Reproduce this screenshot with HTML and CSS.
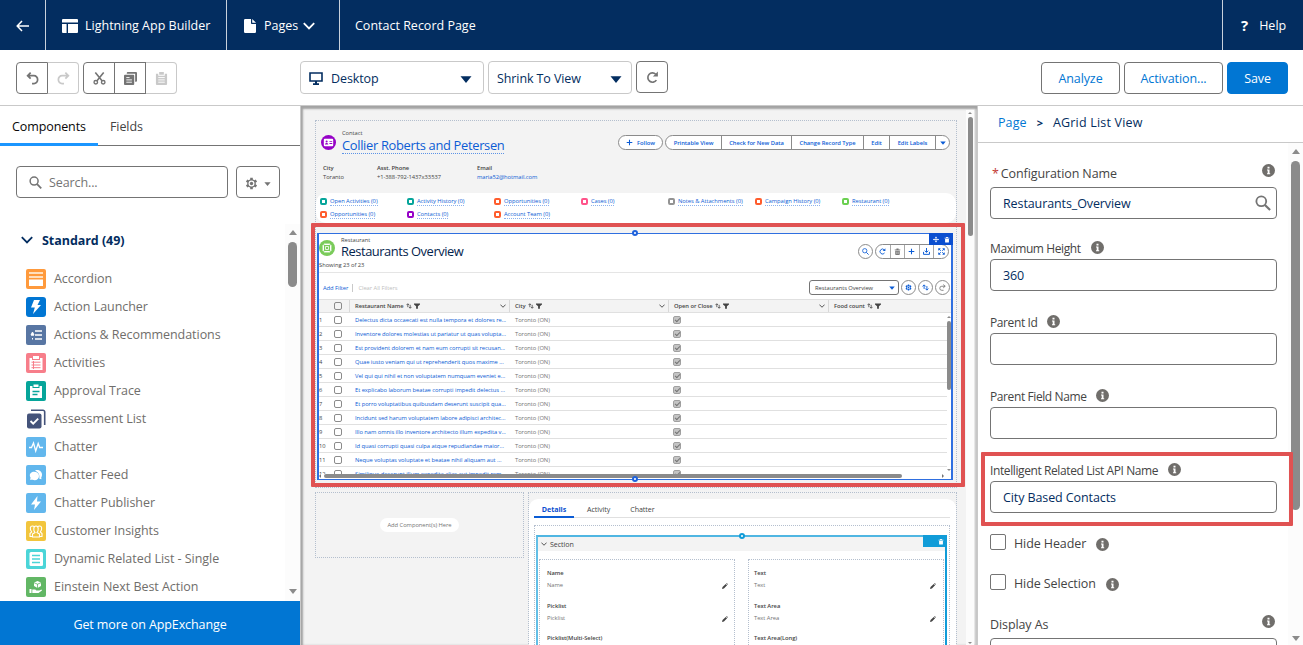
FILE: index.html
```html
<!DOCTYPE html>
<html lang="en">
<head>
    <meta charset="UTF-8" />
    <meta name="viewport" content="width=device-width, initial-scale=1" />
    <title>Lightning App Builder</title>
    <link rel="stylesheet" href="styles.css">
</head>
<body>

    <!-- Icon sprite -->
    <svg class="sprite" aria-hidden="true">
        <symbol id="back" viewBox="0 0 14 12"><path d="M13 6H1.5M6 1L1.2 6L6 11" fill="none" stroke="currentColor" stroke-width="1.5"/></symbol>
        <symbol id="layout" viewBox="0 0 16 14"><path d="M1 0h14a1 1 0 0 1 1 1v2.6H0V1a1 1 0 0 1 1-1zM0 5h4.6v9H1a1 1 0 0 1-1-1zM6 5h10v8a1 1 0 0 1-1 1H6z" fill="currentColor"/></symbol>
        <symbol id="page" viewBox="0 0 12 14"><path d="M1.2 0H7v4.2a.8.8 0 0 0 .8.8H12v7.8a1.2 1.2 0 0 1-1.2 1.2H1.2A1.2 1.2 0 0 1 0 12.8V1.2A1.2 1.2 0 0 1 1.2 0zM8.2 0L12 3.800H8.200z" fill="currentColor"/></symbol>
        <symbol id="chev" viewBox="0 0 12 8"><path d="M.8 1.200L6 6.500L11.200 1.200" fill="none" stroke="currentColor" stroke-width="1.800"/></symbol>
        <symbol id="undo" viewBox="0 0 14 14"><path d="M5 .8L1.800 4L5 7.200M1.800 4H8.500a4 4 0 0 1 4 4.200a4 4 0 0 1-4 4.200H6.500" fill="none" stroke="currentColor" stroke-width="1.900"/></symbol>
        <symbol id="redo" viewBox="0 0 14 14"><path d="M9 .8L12.200 4L9 7.200M12.200 4H5.500a4 4 0 0 0-4 4.200a4 4 0 0 0 4 4.200H7.500" fill="none" stroke="currentColor" stroke-width="1.900"/></symbol>
        <symbol id="cut" viewBox="0 0 14 14"><path d="M2.500 .5L9.700 9.500M11.500 .5L4.300 9.500" fill="none" stroke="currentColor" stroke-width="1.700"/><circle cx="3" cy="11" r="1.900" fill="none" stroke="currentColor" stroke-width="1.500"/><circle cx="11" cy="11" r="1.900" fill="none" stroke="currentColor" stroke-width="1.500"/></symbol>
        <symbol id="copy" viewBox="0 0 14 14"><path d="M4 0h9a1 1 0 0 1 1 1v8.500a1 1 0 0 1-1 1H12V2H3V1a1 1 0 0 1 1-1z" fill="currentColor"/><rect x="0" y="3" width="11" height="11" rx="1" fill="currentColor"/><path d="M2.500 6h3.500M2.500 8.500h6M2.500 11h6" stroke="#fff"/></symbol>
        <symbol id="paste" viewBox="0 0 14 14"><path d="M1 2h2.500v2h7V2H13v11a1 1 0 0 1-1 1H2a1 1 0 0 1-1-1zM4.500 0h5v3h-5z" fill="currentColor"/><path d="M3.500 6h7M3.500 8.500h7M3.500 11h7" stroke="#fff"/></symbol>
        <symbol id="desktop" viewBox="0 0 14 13"><path d="M1 1h12v8H1z" fill="none" stroke="currentColor" stroke-width="1.600"/><path d="M6 9h2v2.200h2V13H4v-1.800h2z" fill="currentColor"/></symbol>
        <symbol id="caret" viewBox="0 0 12 7"><path d="M.5 .3h11L6 7z" fill="currentColor"/></symbol>
        <symbol id="refresh" viewBox="0 0 14 14"><path d="M11.200 9.800A5 5 0 1 1 10.500 3.500" fill="none" stroke="currentColor" stroke-width="1.800"/><path d="M12.800 .5V6H7.400z" fill="currentColor"/></symbol>
        <symbol id="search" viewBox="0 0 14 14"><circle cx="5.500" cy="5.500" r="4.300" fill="none" stroke="currentColor" stroke-width="1.600"/><path d="M8.700 8.700L13.200 13.200" stroke="currentColor" stroke-width="1.900"/></symbol>
        <symbol id="gear" viewBox="0 0 14 14"><path d="M7 0.800v12.400M1.700 3.900l10.600 6.200M12.300 3.900L1.700 10.100" stroke="currentColor" stroke-width="2.800"/><circle cx="7" cy="7" r="4.600" fill="currentColor"/><circle cx="7" cy="7" r="3.200" fill="#fff"/><circle cx="7" cy="7" r="1.800" fill="currentColor"/></symbol>
        <symbol id="info" viewBox="0 0 13 13"><circle cx="6.500" cy="6.500" r="6.500" fill="currentColor"/><path d="M5.500 2.800h2v1.800h-2zM5 5.500h2.500v3.700H8.200v1H5v-1h.7V6.500H5z" fill="#fff"/></symbol>
        <symbol id="trash" viewBox="0 0 10 10"><path d="M1 2h8v1.200H1zM3.500 .7h3V2h-3zM1.800 4h6.400v5a1 1 0 0 1-1 1H2.800a1 1 0 0 1-1-1z" fill="currentColor"/><path d="M4 5v3.800M6 5v3.800" stroke="#fff" stroke-width=".7"/></symbol>
        <symbol id="plus" viewBox="0 0 10 10"><path d="M5 1v8M1 5h8" stroke="currentColor" stroke-width="1.500"/></symbol>
        <symbol id="move" viewBox="0 0 10 10"><path d="M5 1v8M1 5h8" stroke="currentColor" stroke-width="1.300"/><path d="M3.200 2.200L5 0l1.800 2.200zM3.200 7.800L5 10l1.800-2.200zM2.200 3.200L0 5l2.200 1.800zM7.800 3.200L10 5L7.800 6.800z" fill="currentColor"/></symbol>
        <symbol id="download" viewBox="0 0 10 10"><path d="M5 0v6M2.500 3.800L5 6.300L7.500 3.800M.8 5.500v3.600h8.400V5.500" fill="none" stroke="currentColor" stroke-width="1.400"/></symbol>
        <symbol id="expand" viewBox="0 0 10 10"><path d="M1 3.500V1h2.500M6.500 1H9v2.500M9 6.500V9H6.500M3.500 9H1V6.500M1 1l3 3M9 1L6 4M9 9L6 6M1 9l3-3" fill="none" stroke="currentColor" stroke-width="1.300"/></symbol>
        <symbol id="sort" viewBox="0 0 10 10"><path d="M3 7V1.500M.8 3.500L3 1.200l2.200 2.300M7 3v5.500M4.800 6.500L7 8.800l2.200-2.300" fill="none" stroke="currentColor" stroke-width="1.300"/></symbol>
        <symbol id="share" viewBox="0 0 10 10"><path d="M6 .8L8.800 3.200L6 5.600M8.800 3.200H4a2.800 2.800 0 0 0 0 5.800h2.500" fill="none" stroke="currentColor" stroke-width="1.200"/></symbol>
        <symbol id="funnel" viewBox="0 0 10 10"><path d="M0 1h10v1.300L6.500 5.500V9.500h-3v-4L0 2.300z" fill="currentColor"/></symbol>
        <symbol id="pencil" viewBox="0 0 8 8"><path d="M0 8l.7-2.600L5 1.200l1.800 1.800L2.600 7.300zM5.600 .7L6.300 0l1.700 1.700l-.7.700z" fill="currentColor"/></symbol>
        <symbol id="card" viewBox="0 0 16 16"><rect x="3" y="4" width="10" height="8" rx="1" fill="#fff"/><circle cx="6" cy="7" r="1.100" fill="#9602c7"/><path d="M4.200 10.200c0-2.200 3.600-2.200 3.600 0zM9 6.300h3v1H9zM9 8.500h3v1H9z" fill="#9602c7"/></symbol>
        <symbol id="chip" viewBox="0 0 16 16"><rect x="4.500" y="4.500" width="7" height="7" rx="1" fill="none" stroke="#fff"/><path d="M6.500 6.500h3v3h-3zM6 3v1.500M8 3v1.500M10 3v1.500M6 11.500V13M8 11.500V13M10 11.500V13M3 6h1.500M3 8h1.500M3 10h1.500M11.500 6H13M11.500 8H13M11.500 10H13" fill="none" stroke="#fff" stroke-width=".8"/></symbol>
    </svg>

    <header class="top-bar">
        <div class="top-cell back-cell"><svg class="i-back"><use href="#back"/></svg></div>
        <div class="top-cell app-cell"><svg class="i-layout"><use href="#layout"/></svg><span>Lightning App Builder</span></div>
        <div class="top-cell pages-cell"><svg class="i-page"><use href="#page"/></svg><span>Pages</span><svg class="i-chev"><use href="#chev"/></svg></div>
        <div class="top-cell title-cell"><span>Contact Record Page</span></div>
        <div class="top-cell help-cell"><b>?</b><span>Help</span></div>
    </header>

    <div class="toolbar">
        <div class="btn-group">
            <button class="tool"><svg><use href="#undo"/></svg></button>
            <button class="tool off"><svg><use href="#redo"/></svg></button>
        </div>
        <div class="btn-group edit-group">
            <button class="tool"><svg><use href="#cut"/></svg></button>
            <button class="tool"><svg><use href="#copy"/></svg></button>
            <button class="tool off"><svg><use href="#paste"/></svg></button>
        </div>
        <div class="picker device-picker"><svg class="i-desktop"><use href="#desktop"/></svg><span>Desktop</span><svg class="i-caret"><use href="#caret"/></svg></div>
        <div class="picker zoom-picker"><span>Shrink To View</span><svg class="i-caret"><use href="#caret"/></svg></div>
        <button class="tool refresh"><svg><use href="#refresh"/></svg></button>
        <div class="actions">
            <button class="action w-analyze">Analyze</button>
            <button class="action w-activation">Activation...</button>
            <button class="action save">Save</button>
        </div>
    </div>

    <div class="workspace">
        <aside class="left-panel">
            <div class="tabs">
                <a class="tab active">Components</a>
                <a class="tab">Fields</a>
            </div>
            <div class="search-row">
                <div class="search-box"><svg><use href="#search"/></svg><span>Search...</span></div>
                <button class="gear-btn"><svg class="i-gear"><use href="#gear"/></svg><svg class="i-small-caret"><use href="#caret"/></svg></button>
            </div>
            <div class="component-area">
                <div class="component-list">
                    <h2><svg class="i-chev"><use href="#chev"/></svg>Standard (49)</h2>
                    <ul>
                        <li><svg viewBox="0 0 20 20"><rect width="20" height="20" rx="2" fill="#ff9a3c"/><path d="M3 3h14v2H3zM3 7h14v2H3z" fill="#ffdfbd"/><path d="M3 10.500h14V17H3z" fill="#fff"/></svg>Accordion</li>
                        <li><svg viewBox="0 0 20 20"><rect width="20" height="20" rx="3" fill="#0176d3"/><path d="M8 3h6l-2.500 5H15L7 17l1.800-6.500H5z" fill="#fff"/></svg>Action Launcher</li>
                        <li><svg viewBox="0 0 20 20"><rect width="20" height="20" rx="2" fill="#5876a3"/><path d="M9 6h7M9 10h7M9 14h7" stroke="#fff" stroke-width="1.500"/><path d="M6.500 7L5 10h3zM6.500 13v1.500M5 10h3" stroke="#fff" fill="#fff"/></svg>Actions &amp; Recommendations</li>
                        <li><svg viewBox="0 0 20 20"><rect width="20" height="20" rx="2" fill="#f77e8a"/><path d="M3.500 5H6v2h8V5h2.500v12h-13zM7 3h6v3H7z" fill="#fff"/><path d="M5.500 9.200h9M5.500 12h9M5.500 14.700h9M7.500 8v8" stroke="#f77e8a"/></svg>Activities</li>
                        <li><svg viewBox="0 0 20 20"><rect width="20" height="20" rx="2" fill="#06a59a"/><path d="M4 5h2.500v2h7V5H16v12H4zM7.500 3.500h5V6h-5z" fill="#fff"/><path d="M6.500 10.500h7M6.500 13.500h5" stroke="#06a59a" stroke-width="1.300"/></svg>Approval Trace</li>
                        <li><svg viewBox="0 0 20 20"><path d="M5 1.300h12a1.700 1.700 0 0 1 1.700 1.700v13" fill="none" stroke="#44537a" stroke-width="1.600"/><rect x="1" y="4.500" width="14.500" height="15" rx="2" fill="#44537a"/><path d="M4.500 12l2.700 2.700l5-5" fill="none" stroke="#fff" stroke-width="1.900"/></svg>Assessment List</li>
                        <li><svg viewBox="0 0 20 20"><rect width="20" height="20" rx="2" fill="#62b7ed"/><path d="M3 10.500h2.500L7.500 6l2.200 8l2.500-7.500l1.500 4h3.300" fill="none" stroke="#fff" stroke-width="1.300"/></svg>Chatter</li>
                        <li><svg viewBox="0 0 20 20"><rect width="20" height="20" rx="2" fill="#62b7ed"/><path d="M9 5.500c3-1.500 7 .5 7 4c0 1.500-.3 2.300-.8 3l.3 1.800l-2.200-.6C14 10 12.500 7 9 5.500z" fill="#fff"/><path d="M4 14.800l.6-2C2.500 9 5 6.700 8 6.700s5 2 5 4.200c0 3.200-3 5.200-6.500 3.900z" fill="#fff"/></svg>Chatter Feed</li>
                        <li><svg viewBox="0 0 20 20"><rect width="20" height="20" rx="2" fill="#62b7ed"/><path d="M11.500 3L5 11.500h4L8 17l7-8.500h-4z" fill="#fff"/></svg>Chatter Publisher</li>
                        <li><svg viewBox="0 0 20 20"><rect width="20" height="20" rx="2" fill="#f2c53d"/><path d="M4 15.500v-3l1.700-1.500C3.500 8 4 5 6.500 5c1 0 1.700.5 1.700.5M16 15.500v-3L14.300 11c2.200-3 1.700-6-.8-6c-1 0-1.700.5-1.700.5M6.500 16v-3L9 11.500C7 9 7.500 5 10 5s3 4 1 6.500l2.500 1.500v3zM3.500 15.500h3M13.500 15.500h3" fill="none" stroke="#fff" stroke-width="1.100"/></svg>Customer Insights</li>
                        <li><svg viewBox="0 0 20 20"><rect width="20" height="20" rx="2" fill="#4bd5d8"/><rect x="3.500" y="3" width="13.500" height="14" rx="1.500" fill="#fff"/><path d="M6 6.500h8M6 10h8M6 13.500h8" stroke="#4bd5d8" stroke-width="1.400"/></svg>Dynamic Related List - Single</li>
                        <li><svg viewBox="0 0 20 20"><rect width="20" height="20" rx="2" fill="#62b765"/><path d="M8 5.500L11.500 4L15 5.500V9l-3.500 2L8 9z" fill="#fff"/><path d="M8 5.700l3.500 1.500L15 5.700M11.500 7v4" fill="none" stroke="#62b765" stroke-width=".8"/><path d="M3.500 12h2v4h-2zM6.300 12.500h3l1 1h3l2.200-1l.5 1l-3.500 2.500H6.300z" fill="#fff"/></svg>Einstein Next Best Action</li>
                    </ul>
                </div>
                <div class="scrollbar left-scroll"><i class="arrow-up"></i><i class="thumb"></i><i class="arrow-down"></i></div>
            </div>
            <a class="exchange">Get more on AppExchange</a>
        </aside>

        <main class="stage">
            <div class="canvas">
                <section class="region head-region">
                    <div class="record-top">
                        <svg class="round purple"><use href="#card"/></svg>
                        <div class="record-name">
                            <small>Contact</small>
                            <a>Collier Roberts and Petersen</a>
                        </div>
                        <div class="pills">
                            <span class="pill w-follow"><svg><use href="#plus"/></svg>Follow</span>
                            <div class="pill-group">
                                <span class="w-print">Printable View</span>
                                <span class="w-check">Check for New Data</span>
                                <span class="w-change">Change Record Type</span>
                                <span class="w-edit">Edit</span>
                                <span class="w-labels">Edit Labels</span>
                                <span class="w-more"><svg><use href="#caret"/></svg></span>
                            </div>
                        </div>
                    </div>
                    <div class="facts">
                        <div class="f-city"><b>City</b><span>Toranto</span></div>
                        <div class="f-phone"><b>Asst. Phone</b><span>+1-388-792-1437x33537</span></div>
                        <div class="f-mail"><b>Email</b><a>maria52@hotmail.com</a></div>
                    </div>
                    <div class="quick-links">
                        <div><i class="teal"></i><a>Open Activities (0)</a></div>
                        <div><i class="teal"></i><a>Activity History (0)</a></div>
                        <div><i class="orange"></i><a>Opportunities (0)</a></div>
                        <div><i class="pink"></i><a>Cases (0)</a></div>
                        <div><i class="gray"></i><a>Notes &amp; Attachments (0)</a></div>
                        <div><i class="orange"></i><a>Campaign History (0)</a></div>
                        <div><i class="green"></i><a>Restaurant (0)</a></div>
                        <div><i class="orange"></i><a>Opportunities (0)</a></div>
                        <div><i class="violet"></i><a>Contacts (0)</a></div>
                        <div><i class="orange"></i><a>Account Team (0)</a></div>
                    </div>

                    <div class="agrid">
                        <div class="agrid-head">
                            <svg class="round lime"><use href="#chip"/></svg>
                            <div class="agrid-title">
                                <small>Restaurant</small>
                                <h1>Restaurants Overview</h1>
                            </div>
                            <p>Showing 23 of 23</p>
                            <div class="agrid-tools">
                                <span class="dot"><svg><use href="#search"/></svg></span>
                                <div class="dot-group">
                                    <span><svg><use href="#refresh"/></svg></span>
                                    <span class="dim"><svg><use href="#trash"/></svg></span>
                                    <span><svg><use href="#plus"/></svg></span>
                                    <span><svg><use href="#download"/></svg></span>
                                    <span><svg><use href="#expand"/></svg></span>
                                </div>
                            </div>
                        </div>
                        <div class="filter-row">
                            <a>Add Filter</a><span class="clear">Clear All Filters</span>
                            <div class="view-select">Restaurants Overview<svg><use href="#caret"/></svg></div>
                            <span class="dot"><svg><use href="#gear"/></svg></span>
                            <span class="dot"><svg><use href="#sort"/></svg></span>
                            <span class="dot dim"><svg><use href="#share"/></svg></span>
                        </div>
                        <div class="grid-row grid-header">
                            <div class="sel"><i class="check"></i></div>
                            <div>Restaurant Name<svg><use href="#sort"/></svg><svg><use href="#funnel"/></svg><svg class="col-chev"><use href="#chev"/></svg></div>
                            <div>City<svg><use href="#sort"/></svg><svg><use href="#funnel"/></svg><svg class="col-chev"><use href="#chev"/></svg></div>
                            <div>Open or Close<svg><use href="#sort"/></svg><svg><use href="#funnel"/></svg><svg class="col-chev"><use href="#chev"/></svg></div>
                            <div>Food count<svg><use href="#sort"/></svg><svg><use href="#funnel"/></svg></div>
                        </div>
                        <div class="grid-view">
                            <div class="grid-body" id="gridBody"></div>
                            <div class="mini-scroll"><i class="arrow-up"></i><i class="thumb"></i><i class="arrow-down"></i></div>
                        </div>
                        <div class="h-scroll"><i class="arrow-left"></i><i class="thumb"></i><i class="arrow-right"></i></div>
                        <div class="badge"><svg><use href="#move"/></svg><svg><use href="#trash"/></svg></div>
                        <i class="handle top"></i>
                        <i class="handle bottom"></i>
                    </div>
                </section>

                <div class="lower">
                    <section class="region drop-region"><span>Add Component(s) Here</span></section>
                    <section class="region detail-region">
                        <div class="detail-card">
                            <nav class="detail-tabs">
                                <a class="active">Details</a><a>Activity</a><a>Chatter</a>
                            </nav>
                            <div class="detail-drop">
                                <div class="section-box">
                                    <div class="section-head"><svg><use href="#chev"/></svg>Section</div>
                                    <div class="field-cols">
                                        <div class="field-col">
                                            <div class="field"><b>Name</b><span>Name</span><svg><use href="#pencil"/></svg></div>
                                            <div class="field"><b>Picklist</b><span>Picklist</span><svg><use href="#pencil"/></svg></div>
                                            <div class="field"><b>Picklist(Multi-Select)</b></div>
                                        </div>
                                        <div class="field-col">
                                            <div class="field"><b>Text</b><span>Text</span><svg><use href="#pencil"/></svg></div>
                                            <div class="field"><b>Text Area</b><span>Text Area</span><svg><use href="#pencil"/></svg></div>
                                            <div class="field"><b>Text Area(Long)</b></div>
                                        </div>
                                    </div>
                                    <div class="badge"><svg><use href="#trash"/></svg></div>
                                    <i class="handle top"></i>
                                </div>
                            </div>
                        </div>
                    </section>
                </div>
            </div>
            <div class="scrollbar stage-scroll"><i class="arrow-up"></i><i class="thumb"></i><i class="arrow-down"></i></div>
            <div class="callout grid-callout"></div>
        </main>

        <aside class="right-panel">
            <div class="crumbs"><a>Page</a><b>&gt;</b><span>AGrid List View</span></div>
            <div class="props">
                <form class="prop-form">
                    <div class="prop first">
                        <label><em>*</em>Configuration Name<svg class="far"><use href="#info"/></svg></label>
                        <div class="input">Restaurants_Overview<svg><use href="#search"/></svg></div>
                    </div>
                    <div class="prop">
                        <label>Maximum Height<svg><use href="#info"/></svg></label>
                        <div class="input">360</div>
                    </div>
                    <div class="prop">
                        <label>Parent Id<svg><use href="#info"/></svg></label>
                        <div class="input"></div>
                    </div>
                    <div class="prop">
                        <label>Parent Field Name<svg><use href="#info"/></svg></label>
                        <div class="input"></div>
                    </div>
                    <div class="prop called-out">
                        <label>Intelligent Related List API Name<svg><use href="#info"/></svg></label>
                        <div class="input">City Based Contacts</div>
                        <div class="callout prop-callout"></div>
                    </div>
                    <div class="ticks">
                        <div class="tick-row"><i></i>Hide Header<svg><use href="#info"/></svg></div>
                        <div class="tick-row"><i></i>Hide Selection<svg><use href="#info"/></svg></div>
                    </div>
                    <div class="prop last">
                        <label>Display As<svg class="far"><use href="#info"/></svg></label>
                        <div class="input"></div>
                    </div>
                </form>
                <div class="scrollbar right-scroll"><i class="arrow-up"></i><i class="thumb"></i><i class="arrow-down"></i></div>
            </div>
        </aside>
    </div>

    <script>
        const restaurants = [
            'Delectus dicta occaecati est nulla tempora et dolores re...',
            'Inventore dolores molestias ut pariatur ut quas volupta...',
            'Est provident dolorem et nam eum corrupti sit recusan...',
            'Quae iusto veniam qui ut reprehenderit quos maxime ...',
            'Vel qui qui nihil et non voluptatem numquam eveniet e...',
            'Et explicabo laborum beatae corrupti impedit delectus ...',
            'Et porro voluptatibus quibusdam deserunt suscipit qua...',
            'Incidunt sed harum voluptatem labore adipisci architec...',
            'Illo nam omnis illo inventore architecto illum expedita v...',
            'Id quasi corrupti quasi culpa atque repudiandae maior...',
            'Neque voluptas voluptate et beatae nihil aliquam aut ...',
            'Similique deserunt illum expedita alias aut impedit rem...'
        ];

        document.getElementById('gridBody').innerHTML = restaurants.map((name, i) => `
            <div class="grid-row">
                <div class="sel"><span>${i + 1}</span><i class="check"></i></div>
                <div><a>${name}</a></div>
                <div class="city">Toronto (ON)</div>
                <div><i class="check on"></i></div>
                <div></div>
            </div>`).join('');
    </script>

</body>
</html>
```
FILE: styles.css
```css
* {
    box-sizing: border-box;
}

body {
    margin: 0;
    width: 1303px;
    height: 645px;
    overflow: hidden;
    display: flex;
    flex-direction: column;
    font-family: 'Segoe UI', 'Open Sans', sans-serif;
    font-size: 12.5px;
    letter-spacing: -0.1px;
    color: #032d60;
    background-color: #fff;
}

.sprite {
    display: none;
}

svg {
    flex: none;
    display: block;
}

button {
    font: inherit;
    letter-spacing: inherit;
    padding: 0;
    background-color: #fff;
}

/* Top bar */
.top-bar {
    height: 50px;
    flex: none;
    display: flex;
    background-color: #032d60;
    color: #fff;
    letter-spacing: 0;
}

.top-cell {
    display: flex;
    align-items: center;
    border-right: 1px solid #c9d1dc;
}

.back-cell { width: 46px; padding-left: 16px; }
.app-cell { width: 181px; padding-left: 16px; gap: 7px; }
.pages-cell { width: 113px; padding-left: 17px; gap: 8px; }
.title-cell { flex: 1; padding-left: 15px; }
.help-cell { width: 80px; padding-left: 18px; gap: 11px; border-right: none; }
.help-cell b { font-size: 15px; }
.i-back { width: 14px; height: 12px; margin-top: 2px; }
.i-layout { width: 16px; height: 14px; margin-top: 2px; }
.i-page { width: 12px; height: 14px; margin-top: 1px; }
.i-chev { width: 12px; height: 8px; }
.pages-cell .i-chev { margin-left: -3px; margin-top: 2px; }

/* Toolbar */
.toolbar {
    height: 56px;
    flex: none;
    display: flex;
    align-items: flex-start;
    padding: 12px 15px 0 16px;
    border-bottom: 1px solid #c9c9c9;
}

.btn-group {
    display: flex;
}

.edit-group {
    margin-left: 4px;
}

.tool {
    width: 32px;
    height: 32px;
    display: flex;
    align-items: center;
    justify-content: center;
    border: 1px solid #747474;
    color: #747474;
}

.tool svg { width: 13px; height: 13px; }
.tool.off { border-color: #c9c9c9; color: #c9c9c9; }
.btn-group .tool + .tool { margin-left: -1px; }
.btn-group .tool.off { border-left: none; width: 31px; margin-left: 0 !important; }
.btn-group .tool:first-child { border-radius: 4px 0 0 4px; }
.btn-group .tool:last-child { border-radius: 0 4px 4px 0; }

.picker {
    height: 33px;
    margin-top: -1px;
    padding-top: 2px;
    display: flex;
    align-items: center;
    border: 1px solid #c9c9c9;
    border-radius: 4px;
}

.device-picker { width: 184px; margin-left: 123px; padding: 2px 11px 0 8px; gap: 8px; }
.zoom-picker { width: 144px; margin-left: 4px; padding: 2px 9px 0 8px; }
.picker .i-caret { margin-left: auto; width: 12px; height: 7px; margin-top: 2px; }
.i-desktop { width: 14px; height: 13px; margin-top: -1px; }

.refresh {
    margin: -1px 0 0 4px;
    border-radius: 4px;
}

.actions {
    margin-left: auto;
    display: flex;
    gap: 4px;
}

.action {
    height: 32px;
    border: 1px solid #747474;
    border-radius: 4px;
    color: #0176d3;
}

.w-analyze { width: 79px; }
.w-activation { width: 99px; }
.save { width: 61px; background-color: #0176d3; border-color: #0176d3; color: #fff; }

.workspace {
    flex: 1;
    display: flex;
    min-height: 0;
}

/* Left panel */
.left-panel {
    width: 300px;
    flex: none;
    display: flex;
    flex-direction: column;
}

.tabs {
    height: 40px;
    flex: none;
    display: flex;
    border-bottom: 1px solid #747474;
}

.tab {
    height: 40px;
    padding: 0 12px;
    line-height: 41px;
    color: #444;
}

.tab.active {
    width: 98px;
    color: #080707;
    border-bottom: 3px solid #1b96ff;
}

.search-row {
    display: flex;
    gap: 8px;
    padding: 20px 20px 0 16px;
}

.search-box {
    width: 212px;
    height: 32px;
    display: flex;
    align-items: center;
    gap: 7px;
    padding-left: 12px;
    border: 1px solid #747474;
    border-radius: 4px;
    color: #747474;
}

.search-box svg { width: 13px; height: 13px; }

.gear-btn {
    width: 44px;
    display: flex;
    align-items: center;
    justify-content: center;
    gap: 6px;
    border: 1px solid #747474;
    border-radius: 4px;
    color: #747474;
}

.i-gear { width: 13px; height: 13px; margin-top: 3px; }
.i-small-caret { width: 7px; height: 4px; margin-top: 3px; }

.component-area {
    flex: 1;
    display: flex;
    min-height: 0;
    margin-top: 26px;
}

.component-list {
    flex: 1;
    overflow: hidden;
}

.component-list h2 {
    display: flex;
    align-items: center;
    gap: 9px;
    height: 32px;
    margin: 0 0 8px;
    padding-left: 21px;
    font-size: 12.5px;
    font-weight: 700;
    letter-spacing: -0.05px;
}

.component-list ul {
    list-style: none;
    margin: 0;
    padding: 0;
}

.component-list li {
    display: flex;
    align-items: center;
    gap: 8px;
    height: 28px;
    padding: 1px 0 0 26px;
    color: #706e6b;
    letter-spacing: -0.04px;
}

.component-list li svg { width: 20px; height: 20px; margin-top: 1px; }

.exchange {
    height: 44px;
    flex: none;
    display: flex;
    align-items: center;
    justify-content: center;
    background-color: #0176d3;
    color: #fff;
    padding-top: 2px;
}

/* Scrollbars */
.scrollbar {
    flex: none;
    display: flex;
    flex-direction: column;
    align-items: center;
    background-color: #fcfcfc;
}

.arrow-up,
.arrow-down {
    border: 4.5px solid transparent;
    border-top-width: 0;
    border-bottom: 5px solid #8b8b8b;
}

.arrow-down {
    border-bottom-width: 0;
    border-top: 5px solid #8b8b8b;
    margin-top: auto;
}

.thumb {
    width: 9px;
    border-radius: 5px;
    background-color: #8b8b8b;
}

.left-scroll { width: 15px; padding: 6px 0 7px; }
.left-scroll .thumb { height: 45px; margin-top: 7px; }

/* Stage */
.stage {
    position: relative;
    width: 678px;
    flex: none;
    display: flex;
    overflow: hidden;
    background-color: #f3f3f3;
    border-left: 1px solid #c9c9c9;
    border-right: 1px solid #c9c9c9;
    box-shadow: inset 2px 3px 2px #a3a3a3, inset -2px 0 2px #c4c4c4;
    font-size: 5.8px;
    letter-spacing: -0.05px;
    line-height: 8px;
    color: #444;
}

.stage a {
    color: #0b5cd5;
}

.canvas {
    width: 665px;
    flex: none;
    padding: 14px 0 0 14px;
}

.region {
    border: 1px dotted #b4bfce;
}

.head-region {
    width: 642px;
    height: 368px;
}

.record-top {
    display: flex;
    height: 43px;
    padding: 9px 6px 0 5px;
}

.round {
    width: 15px;
    height: 15px;
    border-radius: 50%;
}

.purple { background-color: #9602c7; margin-top: 5px; }
.lime { background-color: #7acb5a; width: 16px; height: 16px; }

.record-name {
    margin-left: 6px;
    display: flex;
    flex-direction: column;
    align-items: flex-start;
}

.record-name small,
.agrid-title small {
    font-size: 5.8px;
    line-height: 7px;
}

.record-name a {
    font-size: 12.9px;
    letter-spacing: -0.32px;
    line-height: 16px;
    border-bottom: 1px dotted #5c93e6;
}

.pills {
    display: flex;
    gap: 2px;
    margin-left: auto;
    margin-top: 5px;
    font-weight: 600;
    color: #0b5cd5;
}

.pill,
.pill-group {
    display: flex;
    height: 15px;
    border: 1px solid #8b8b8b;
    border-radius: 8px;
    background-color: #fff;
}

.pill {
    align-items: center;
    justify-content: center;
    gap: 4px;
}

.pill svg { width: 7px; height: 7px; }

.pill-group span {
    display: flex;
    align-items: center;
    justify-content: center;
    border-right: 1px solid #8b8b8b;
}

.pill-group span:last-child { border-right: none; }
.w-follow { width: 45px; }
.w-print { width: 56px; }
.w-check { width: 70px; }
.w-change { width: 72px; }
.w-edit { width: 26px; }
.w-labels { width: 46px; }
.w-more { width: 13px; }
.w-more svg { width: 6px; height: 4px; }

.facts {
    display: flex;
    padding-left: 7px;
    height: 29px;
}

.facts > div { display: flex; flex-direction: column; line-height: 9px; }
.facts b { font-weight: 600; }
.f-city { width: 54px; }
.f-phone { width: 100px; }

.quick-links {
    display: grid;
    grid-template-columns: repeat(7, 87px);
    grid-auto-rows: 13px;
    height: 30px;
    padding: 2px 4px;
    border-radius: 10px;
    background-color: #fff;
    overflow: hidden;
}

.quick-links div { display: flex; align-items: center; gap: 3px; white-space: nowrap; }
.quick-links a { border-bottom: 1px dotted #8bb2ee; line-height: 7px; }

.quick-links i {
    width: 7px;
    height: 7px;
    border-width: 2px;
    border-style: solid;
    border-radius: 2px;
    background-color: #fff;
}

.teal { border-color: #06a59a; }
.orange { border-color: #ff5d2d; }
.pink { border-color: #ff538a; }
.gray { border-color: #939393; }
.green { border-color: #6bd051; }
.violet { border-color: #9602c7; }

/* Grid component */
.agrid {
    position: relative;
    width: 636px;
    height: 247px;
    margin: 10px 0 0 1px;
    border: 1px solid #2f6fe0;
    border-left-width: 2px;
    border-right-width: 2px;
    background-color: #fff;
}

.agrid-head {
    display: flex;
    flex-wrap: wrap;
    align-content: flex-start;
    height: 39px;
    padding-top: 3px;
    border-bottom: 1px solid #e5e5e5;
}

.agrid-head .lime { margin-top: 3px; }
.agrid-title { margin-left: 6px; display: flex; flex-direction: column; height: 24px; }

.agrid-title h1 {
    margin: 0;
    font-size: 12.9px;
    font-weight: 400;
    letter-spacing: -0.45px;
    line-height: 15px;
    color: #03234d;
}

.agrid-head p {
    order: 3;
    width: 100%;
    margin: 0;
    line-height: 8px;
}

.agrid-tools {
    display: flex;
    gap: 2px;
    margin: 7px 2px 0 auto;
    height: 15px;
}

.dot,
.dot-group {
    display: flex;
    height: 15px;
    border: 1px solid #8b8b8b;
    border-radius: 8px;
    color: #0b5cd5;
    background-color: #fff;
}

.dot { width: 15px; align-items: center; justify-content: center; }
.dot-group { width: 74px; }
.dot-group span { flex: 1; display: flex; align-items: center; justify-content: center; border-right: 1px solid #a8a8a8; }
.dot-group span:last-child { border-right: none; }
.dot svg, .dot-group svg { width: 7px; height: 7px; }
.dot.dim, .dot-group .dim { color: #747474; }

.filter-row {
    display: flex;
    align-items: center;
    height: 26px;
    padding: 3px 1px 0 4px;
    gap: 2px;
}

.clear {
    margin-left: 2px;
    padding-left: 5px;
    border-left: 1px solid #c9c9c9;
    color: #c0c0c0;
}

.view-select {
    display: flex;
    align-items: center;
    justify-content: space-between;
    width: 90px;
    height: 15px;
    margin-left: auto;
    padding: 0 3px 0 5px;
    border: 1px solid #747474;
    border-radius: 3px;
}

.view-select svg { width: 6px; height: 4px; color: #0b5cd5; }

.grid-row {
    display: grid;
    grid-template-columns: 31px 160px 159px 160px 1fr;
    height: 14px;
    border-bottom: 1px solid #e0e0e0;
}

.grid-row > div {
    display: flex;
    align-items: center;
    padding-left: 5px;
    white-space: nowrap;
}

.grid-header {
    background-color: #f3f3f3;
    border-top: 1px solid #e0e0e0;
    font-weight: 600;
}

.grid-header > div { border-right: 1px solid #d8d8d8; gap: 1px; }
.grid-header > div:last-child { border-right: none; }
.grid-header svg { width: 6px; height: 6px; margin-left: 1px; }
.grid-header .col-chev { width: 6px; height: 4px; margin: 0 3px 0 auto; }

.grid-row > .sel { padding: 0 8px 0 0; }
.grid-header > .sel { padding-right: 7px; }
.sel .check { margin-left: auto; }
.grid-row .city { color: #747474; }

.check {
    width: 8px;
    height: 8px;
    border: 1px solid #8b8b8b;
    border-radius: 2px;
}

.check.on {
    background-color: #c4c4c4;
    border-color: #a0a0a0;
    margin-left: -1px;
}

.check.on::after {
    content: '';
    display: block;
    width: 4px;
    height: 2px;
    margin: 1px;
    border: solid #747474;
    border-width: 0 0 1px 1px;
    transform: rotate(-45deg);
}

.grid-view {
    display: flex;
    height: 161px;
}

.grid-body {
    width: 628px;
    height: 161px;
    overflow: hidden;
}

.mini-scroll {
    width: 4px;
    display: flex;
    flex-direction: column;
    align-items: center;
    padding: 3px 0 3px;
}

.mini-scroll .thumb { width: 4px; height: 69px; margin-top: 3px; border-radius: 2px; }
.mini-scroll .arrow-up, .mini-scroll .arrow-down, .stage-scroll .arrow-up, .stage-scroll .arrow-down { border-left-width: 2px; border-right-width: 2px; }
.mini-scroll .arrow-up, .stage-scroll .arrow-up { border-bottom-width: 2px; }
.mini-scroll .arrow-down, .stage-scroll .arrow-down { border-top-width: 2px; }

.h-scroll {
    display: flex;
    align-items: center;
    height: 4px;
    padding-right: 7px;
}

.h-scroll .thumb { width: 578px; height: 4px; border-radius: 2px; margin-left: 3px; }
.arrow-left, .arrow-right { border: 2px solid transparent; }
.arrow-left { border-left-width: 0; border-right-color: #747474; }
.arrow-right { border-right-width: 0; border-left-color: #747474; margin-left: auto; }

.badge {
    position: absolute;
    top: -1px;
    right: -2px;
    display: flex;
    align-items: center;
    justify-content: center;
    gap: 5px;
    width: 24px;
    height: 12px;
    color: #fff;
    background-color: #0b4fd0;
}

.badge svg { width: 6px; height: 7px; }

.handle {
    position: absolute;
    left: 50%;
    width: 6px;
    height: 6px;
    margin-left: -3px;
    border: 2px solid #1f62dc;
    border-radius: 50%;
    background-color: #fff;
}

.handle.top { top: -4px; }
.handle.bottom { bottom: -3px; }

/* Lower regions */
.lower {
    display: flex;
    align-items: flex-start;
    gap: 4px;
    margin-top: 4px;
}

.drop-region {
    width: 209px;
    height: 66px;
    display: flex;
    align-items: center;
    justify-content: center;
}

.drop-region span {
    padding: 3px 7px;
    border-radius: 8px;
    background-color: #fff;
    color: #747474;
}

.detail-region {
    width: 429px;
    height: 200px;
}

.detail-card {
    height: 200px;
    margin-top: 6px;
    padding: 2px 6px 0 5px;
    border-radius: 9px;
    background-color: #fff;
}

.detail-tabs {
    display: flex;
    height: 17px;
    border-bottom: 1px solid #e0e0e0;
    font-size: 7.1px;
}

.detail-tabs a { color: #444; line-height: 16px; margin-right: 20px; }
.detail-tabs .active { height: 17px; width: 40px; margin-right: 13px; text-align: center; border-bottom: 2px solid #0b5cd5; font-weight: 700; color: #0b4fd0; }

.detail-drop {
    height: 190px;
    margin-top: 7px;
    padding: 9px 2px 0 1px;
    border: 1px dotted #b4bfce;
}

.section-box {
    position: relative;
    height: 180px;
    border: 2px solid #119cd8;
    border-left-color: #62bfe6;
    border-top-color: #4fb6e2;
}

.section-head {
    display: flex;
    align-items: center;
    gap: 3px;
    height: 14px;
    padding: 0 0 1px 3px;
    background-color: #f3f3f3;
    font-size: 7.1px;
}

.section-head svg { width: 6px; height: 4px; }
.section-box .badge { top: -2px; padding-left: 12px; background-color: #119cd8; }
.section-box .handle { border-color: #119cd8; top: -4px; }

.field-cols {
    display: flex;
    justify-content: space-between;
    padding: 8px 1px 0;
}

.field-col {
    width: 196px;
    height: 160px;
    padding: 9px 6px 0 7px;
    border: 1px dotted #b4bfce;
}

.field-col + .field-col { padding-left: 5px; padding-right: 7px; }

.field {
    position: relative;
    display: flex;
    flex-direction: column;
    height: 32.5px;
    line-height: 8px;
}

.field b { font-weight: 600; margin-bottom: 4px; }
.field span { color: #747474; }
.field svg { position: absolute; right: 0; top: 14px; width: 6px; height: 6px; }

.stage-scroll {
    width: 8px;
    margin-top: 4px;
    padding: 2px 0 1px;
}

.stage-scroll .thumb { width: 5px; height: 119px; margin-top: 3px; }

.callout {
    position: absolute;
    border: 4px solid #e05252;
    border-radius: 1px;
}

.grid-callout { left: 10px; top: 117px; width: 654px; height: 264px; }

/* Right panel */
.right-panel {
    flex: 1;
    display: flex;
    flex-direction: column;
}

.crumbs {
    height: 37px;
    flex: none;
    display: flex;
    align-items: center;
    gap: 9px;
    padding: 0 0 4px 20px;
    border-bottom: 1px solid #c9c9c9;
}

.crumbs a { color: #0176d3; margin-right: 1px; letter-spacing: 0.1px; }
.crumbs span { letter-spacing: 0.45px; }
.crumbs span { margin-left: 1px; letter-spacing: 0.2px; }
.crumbs b { font-size: 11px; }

.props {
    flex: 1;
    display: flex;
    min-height: 0;
    overflow: hidden;
}

.prop-form {
    width: 310px;
    padding: 16px 11px 0 12px;
}

.prop {
    position: relative;
    height: 74px;
}

.prop.first { height: 72px; }

.prop label {
    display: flex;
    align-items: center;
    height: 28px;
    color: #444;
}

.prop em { color: #c23934; font-style: normal; margin: 0 2px 0 2px; }
.prop label svg, .tick-row svg { width: 13px; height: 13px; margin-left: 10px; color: #706e6b; }
.prop label .far { margin: -5px 2px 0 auto; }

.input {
    display: flex;
    align-items: center;
    justify-content: space-between;
    height: 32px;
    padding: 0 5px 0 12px;
    border: 1px solid #747474;
    border-radius: 4px;
}

.prop:not(.first):not(.last) label {
    padding-top: 6px;
    font-size: 12px;
    letter-spacing: -0.4px;
}

.input svg { width: 16px; height: 16px; color: #747474; }
.prop:not(.first):not(.last) label svg { margin-top: -2px; }
.prop-callout { left: -9px; top: -1px; width: 312px; height: 74px; }
.called-out { z-index: 1; }

.ticks {
    margin-top: -3px;
}

.tick-row {
    display: flex;
    align-items: center;
    height: 40px;
    padding-bottom: 2px;
    color: #444;
}

.tick-row i { width: 16px; height: 16px; border: 1px solid #747474; border-radius: 2px; margin: -2px 8px 0 0; }
.tick-row svg { margin-top: 2px; }
.prop.last { margin-top: 6px; }

.right-scroll { width: 15px; padding: 6px 0 4px; }
.right-scroll .thumb { height: 349px; margin-top: 7px; }
```
